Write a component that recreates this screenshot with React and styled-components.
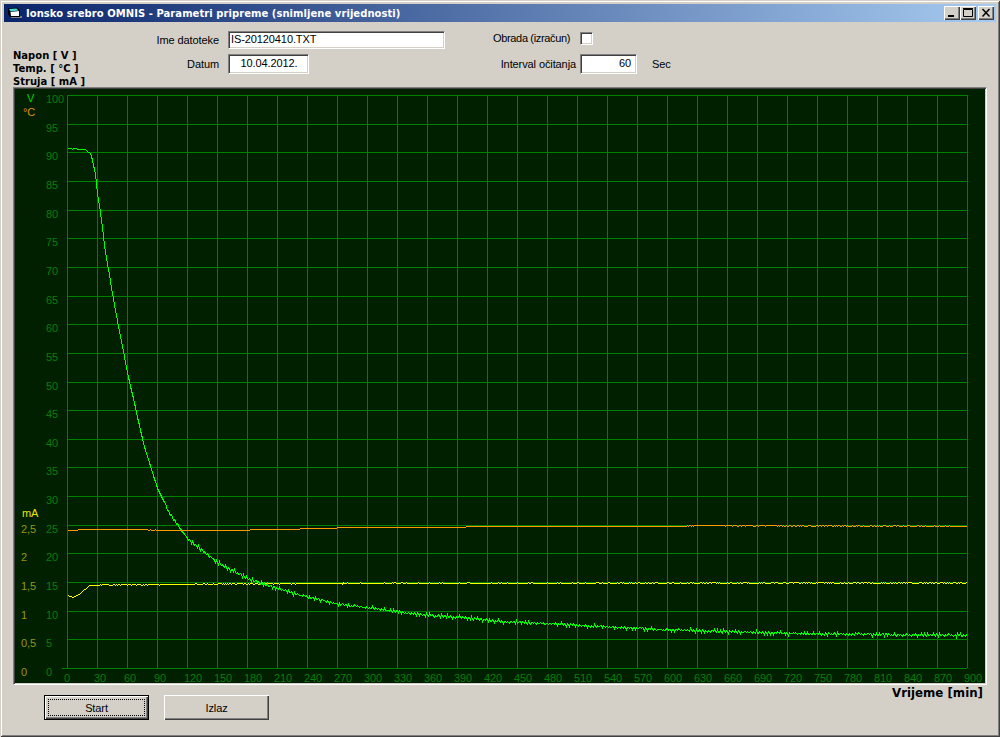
import React from 'react';
import styled, { createGlobalStyle } from 'styled-components';

const GlobalStyle = createGlobalStyle`
    html, body {
        margin: 0;
        padding: 0;
        background: #d4d0c8;
    }
`;

const Window = styled.div`
    box-sizing: border-box;
    width: 1000px;
    height: 737px;
    padding: 4px;
    background: #d4d0c8;
    font-family: "Liberation Sans", Arial, sans-serif;
    font-size: 11px;
    letter-spacing: -.1px;
    color: #000;
    box-shadow: inset 1px 1px #d4d0c8, inset -1px -1px #404040, inset 2px 2px #fff, inset -2px -2px #808080;
`;

const TitleBar = styled.div`
    display: flex;
    align-items: center;
    height: 18px;
    padding: 0 2px 0 4px;
    background: linear-gradient(90deg, #0a246a, #a6caf0);
`;

const TitleText = styled.div`
    margin-left: 4px;
    font-family: "DejaVu Sans", sans-serif;
    font-size: 10px;
    font-weight: bold;
    letter-spacing: .05px;
    color: #fff;
    white-space: nowrap;
`;

const TitleButtons = styled.div`
    display: flex;
    margin-left: auto;
`;

const CaptionButton = styled.div`
    display: flex;
    align-items: center;
    justify-content: center;
    width: 16px;
    height: 14px;
    margin-left: ${props => props.gap || 0}px;
    background: #d4d0c8;
    box-shadow: inset 1px 1px #fff, inset -1px -1px #404040, inset -2px -2px #808080;
`;

const Header = styled.div`
    display: grid;
    grid-template-columns: 127px 88px 217px 135px 13px 44px auto;
    grid-template-rows: 18px 20px 9px;
    row-gap: 5px;
    height: 65px;
    box-sizing: border-box;
    padding: 9px 0 0 9px;
`;

const Legend = styled.div`
    grid-column: 1;
    grid-row: 1 / 4;
    align-self: end;
    font-family: "DejaVu Sans", sans-serif;
    font-size: 10px;
    font-weight: bold;
    letter-spacing: 0;
    line-height: 13px;
    white-space: nowrap;
`;

const Label = styled.div`
    grid-column: ${props => props.column};
    grid-row: ${props => props.row};
    align-self: center;
    text-align: right;
    padding-right: ${props => props.gap}px;
    white-space: nowrap;
`;

const CheckLabel = styled(Label)`
    align-self: start;
    margin-top: 1px;
    letter-spacing: -.35px;
`;

const Unit = styled.div`
    grid-column: 7;
    grid-row: 2;
    align-self: center;
    padding-left: 15px;
`;

const Field = styled.div`
    box-sizing: border-box;
    grid-column: ${props => props.column};
    grid-row: ${props => props.row};
    width: ${props => props.width}px;
    height: 100%;
    line-height: ${props => props.row === 2 ? 17 : 15}px;
    padding: 0 ${props => props.align === 'right' ? 5 : 1}px 0 2px;
    text-align: ${props => props.align || 'left'};
    background: #fff;
    border: 1px solid;
    border-color: #808080 #fff #fff #808080;
    box-shadow: inset 1px 1px #404040, inset -1px -1px #d4d0c8;
`;

const Check = styled.div`
    box-sizing: border-box;
    grid-column: 5;
    grid-row: 1;
    align-self: start;
    margin-top: 1px;
    width: 13px;
    height: 13px;
    background: #fff;
    border: 1px solid;
    border-color: #808080 #fff #fff #808080;
    box-shadow: inset 1px 1px #404040, inset -1px -1px #d4d0c8;
`;

const ChartPanel = styled.div`
    box-sizing: border-box;
    width: 974px;
    height: 598px;
    margin-left: 9px;
    background: #002000;
    border: 1px solid;
    border-color: #808080 #fff #fff #808080;
    box-shadow: inset 1px 1px #404040, inset -1px -1px #d4d0c8;
    padding: 1px;
`;

const ChartSvg = styled.svg`
    display: block;
    font-family: "Liberation Sans", Arial, sans-serif;
    font-size: 11px;
`;

const Footer = styled.div`
    display: flex;
    align-items: flex-start;
    padding-left: 40px;
`;

const PushButton = styled.div`
    position: relative;
    box-sizing: border-box;
    display: flex;
    align-items: center;
    justify-content: center;
    width: 105px;
    height: 25px;
    margin: 10px 15px 0 0;
    background: #d4d0c8;
    border: ${props => props.primary ? '1px solid #000' : '0'};
    box-shadow: inset 1px 1px #fff, inset -1px -1px #404040, inset -2px -2px #808080;

    &::after {
        content: '';
        display: ${props => props.primary ? 'block' : 'none'};
        position: absolute;
        inset: 3px;
        border: 1px dotted #000;
    }
`;

const AxisTitle = styled.div`
    margin: 1px 0 0 auto;
    padding-right: 13px;
    font-family: "DejaVu Sans", sans-serif;
    font-size: 11.8px;
    font-weight: bold;
    letter-spacing: 0;
    white-space: nowrap;
`;

const PLOT_LEFT = 67;
const PLOT_RIGHT = 967;
const PLOT_TOP = 95;
const PLOT_BOTTOM = 668;

const GRID = '#008000';
const X_TICKS = Array.from({ length: 31 }, (_, i) => i * 30);
const Y_TICKS = Array.from({ length: 21 }, (_, i) => i * 5);
const MA_TICKS = ['0', '0,5', '1', '1,5', '2', '2,5'];

const GREEN_CURVE = [
    [67, 148], [85, 149], [90, 153], [92, 160], [95, 173], [97, 193], [99, 205], [102, 227],
    [104, 245], [115, 310], [127, 372], [143, 443], [157, 488], [170, 514], [180, 528],
    [187, 538], [217, 562], [247, 578], [277, 588], [300, 595], [340, 604], [380, 609],
    [420, 614], [460, 617], [500, 621], [540, 623], [660, 629], [787, 633], [966, 635],
];

const YELLOW_CURVE = [
    [67, 595], [73, 597], [80, 593], [89, 585], [100, 584.5], [300, 583], [966, 582.5],
];

const ORANGE_CURVE = [
    [67, 530], [77, 530], [78, 529], [93, 529], [94, 528.6], [135, 528.6], [145, 529.4], [205, 530.4],
    [240, 530], [262, 529], [299, 528.6], [300, 528], [336, 528], [337, 527], [465, 527], [466, 526],
    [640, 526], [700, 525.4], [966, 525.6],
];

// linear interpolation over a table of [x, y] points
const lookup = (table, x) => {
    for (let i = 1; i < table.length; i++) {
        if (x <= table[i][0]) {
            const [x0, y0] = table[i - 1];
            const [x1, y1] = table[i];
            return y0 + (y1 - y0) * (x - x0) / (x1 - x0);
        }
    }
    return table[table.length - 1][1];
};

const wobble = (x, seed) => {
    const v = Math.sin(x * 12.9898 + seed) * 43758.5453;
    return v - Math.floor(v) - .5;
};

const makeLine = (table, amount, seed, comb = () => 0) => {
    const points = [];
    for (let x = PLOT_LEFT; x <= 966; x++) {
        const y = lookup(table, x) + wobble(x, seed) * amount(x) + ((x % 3) - 1) * comb(x);
        points.push(`${x + .5},${Math.round(y) + .5}`);
    }
    return points.join(' ');
};

// the green trace gets a fine comb of noise once it flattens out
const greenNoise = (x) => x < 165 ? 1 : 1.6;
const greenComb = (x) => x < 165 ? 0 : 1;

const App = () => {
    const green = React.useMemo(() => makeLine(GREEN_CURVE, greenNoise, 1, greenComb), []);
    const yellow = React.useMemo(() => makeLine(YELLOW_CURVE, (x) => x < 100 ? 0 : 1.1, 2), []);
    const orange = React.useMemo(() => makeLine(ORANGE_CURVE, () => .2, 3), []);

    return (
        <Window>
            <GlobalStyle />
            <TitleBar>
                <svg width="14" height="14" viewBox="0 0 14 14">
                    <rect x="3" y="10" width="11" height="2" fill="#808080" />
                    <path d="M0 2.5 L9 1.5 L12 4 L12 11 L2 11 L0 8 Z" fill="#000" />
                    <path d="M1 3 L8.5 2.5 L10.5 4.5 L2.5 5.5 Z" fill="#4fd6d6" />
                    <path d="M2.5 6 L11 5 L11 10 L3 10 Z" fill="#fff" />
                </svg>
                <TitleText>Ionsko srebro OMNIS - Parametri pripreme (snimljene vrijednosti)</TitleText>
                <TitleButtons>
                    <CaptionButton>
                        <svg width="16" height="14" viewBox="0 0 16 14"><rect x="4" y="9" width="6" height="2" fill="#000" /></svg>
                    </CaptionButton>
                    <CaptionButton>
                        <svg width="16" height="14" viewBox="0 0 16 14"><path d="M3.5 3.5 H12.5 V10.5 H3.5 Z M3 2.5 H13" fill="none" stroke="#000" /></svg>
                    </CaptionButton>
                    <CaptionButton gap={2}>
                        <svg width="16" height="14" viewBox="0 0 16 14"><path d="M4.5 3 L11.5 10.5 M11.5 3 L4.5 10.5" stroke="#000" strokeWidth="1.5" /></svg>
                    </CaptionButton>
                </TitleButtons>
            </TitleBar>

            <Header>
                <Legend>
                    <div>Napon [ V ]</div>
                    <div>Temp. [ °C ]</div>
                    <div>Struja [ mA ]</div>
                </Legend>
                <Label column={2} row={1} gap={9}>Ime datoteke</Label>
                <Field column={3} row={1} width={217}>IS-20120410.TXT</Field>
                <CheckLabel column={4} row={1} gap={10}>Obrada (izračun)</CheckLabel>
                <Check />
                <Label column={2} row={2} gap={9}>Datum</Label>
                <Field column={3} row={2} width={81} align="center">10.04.2012.</Field>
                <Label column={4} row={2} gap={4}>Interval očitanja</Label>
                <Field column="5 / 7" row={2} width={57} align="right">60</Field>
                <Unit>Sec</Unit>
            </Header>

            <ChartPanel>
                <ChartSvg width="970" height="594" viewBox="15 89 970 594">
                    {X_TICKS.map((t) => {
                        const x = PLOT_LEFT + t + .5;
                        return <line key={t} x1={x} x2={x} y1={PLOT_TOP} y2={PLOT_BOTTOM} stroke={GRID} shapeRendering="crispEdges" />;
                    })}
                    {Y_TICKS.map((t) => {
                        const y = Math.round(PLOT_BOTTOM - t * 5.73) + .5;
                        return <line key={t} x1={t === 0 ? 62 : PLOT_LEFT} x2={PLOT_RIGHT} y1={y} y2={y} stroke={GRID} shapeRendering="crispEdges" />;
                    })}
                    {Y_TICKS.map((t) => (
                        <text key={t} x="46" y={Math.round(PLOT_BOTTOM - t * 5.73) + 8} fill="#0a7c0a">{t}</text>
                    ))}
                    {X_TICKS.map((t) => (
                        <text key={t} x={PLOT_LEFT + t - 3} y="682" fill="#0a7c0a">{t}</text>
                    ))}
                    {MA_TICKS.map((t, i) => (
                        <text key={t} x="21" y={676 - i * 28.7} fill="#969614">{t}</text>
                    ))}
                    <text x="22" y="517" fill="#e6e600">mA</text>
                    <text x="27" y="102" fill="#00d800">V</text>
                    <text x="23" y="116" fill="#e09000">°C</text>
                    <polyline points={orange} fill="none" stroke="#ff9900" shapeRendering="crispEdges" />
                    <polyline points={yellow} fill="none" stroke="#ffff00" shapeRendering="crispEdges" />
                    <polyline points={green} fill="none" stroke="#00ff00" shapeRendering="crispEdges" />
                </ChartSvg>
            </ChartPanel>

            <Footer>
                <PushButton primary>Start</PushButton>
                <PushButton>Izlaz</PushButton>
                <AxisTitle>Vrijeme [min]</AxisTitle>
            </Footer>
        </Window>
    );
};

export default App;
